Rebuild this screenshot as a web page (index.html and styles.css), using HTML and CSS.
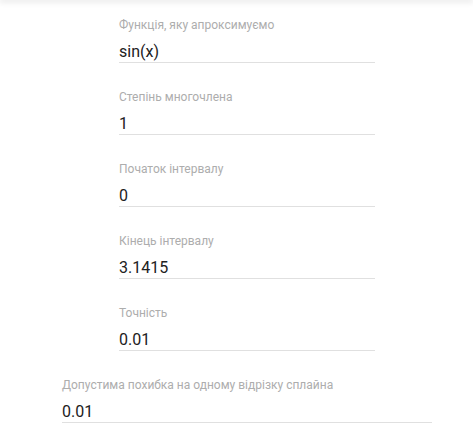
FILE: index.html
```html
<!DOCTYPE html>
<html lang="uk">
<head>
<meta charset="utf-8">
<link rel="stylesheet" href="styles.css">
</head>
<body>
<div class="topbar"></div>
<main class="page">
  <div class="column">
    <div class="field">
      <div class="label">Функція, яку апроксимуємо</div>
      <div class="value">sin(x)</div>
    </div>
    <div class="field">
      <div class="label">Степінь многочлена</div>
      <div class="value">1</div>
    </div>
    <div class="field">
      <div class="label">Початок інтервалу</div>
      <div class="value">0</div>
    </div>
    <div class="field">
      <div class="label">Кінець інтервалу</div>
      <div class="value">3.1415</div>
    </div>
    <div class="field">
      <div class="label">Точність</div>
      <div class="value">0.01</div>
    </div>
  </div>
  <div class="field wide">
    <div class="label">Допустима похибка на одному відрізку сплайна</div>
    <div class="value">0.01</div>
  </div>
</main>
</body>
</html>
```
FILE: styles.css
```css
html, body {
  margin: 0;
  padding: 0;
  background: #ffffff;
  font-family: Roboto, "Noto Sans", sans-serif;
  overflow: hidden;
}
.topbar {
  height: 0;
  box-shadow: 0 0 6px 1px rgba(0, 0, 0, 0.22);
}
.page {
  display: flex;
  flex-direction: column;
  gap: 27px;
  padding-top: 18px;
}
.column {
  display: flex;
  flex-direction: column;
  gap: 27px;
  width: 256px;
  margin-left: 119px;
}
.field {
  display: flex;
  flex-direction: column;
}
.wide {
  width: 370px;
  margin-left: 62px;
}
.label {
  font-size: 12px;
  line-height: 14px;
  color: #adadad;
  white-space: nowrap;
}
.value {
  margin-top: 10px;
  font-size: 16px;
  line-height: 20px;
  color: #212121;
  border-bottom: 1px solid #e0e0e0;
}
```
